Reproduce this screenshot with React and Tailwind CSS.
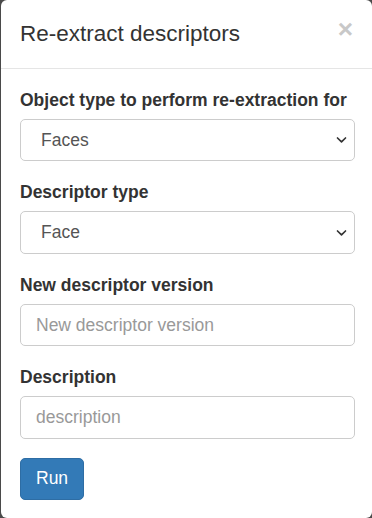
import React from "react";

const font = { fontFamily: '"Liberation Sans", Arial, Helvetica, sans-serif' };

function Chevron() {
  return (
    <svg className="pointer-events-none absolute right-[8px] top-1/2 -translate-y-1/2" width="11" height="7" viewBox="0 0 11 7" fill="none">
      <path d="M1.5 1.5 L5.5 5.3 L9.5 1.5" stroke="#333" strokeWidth="1.7" strokeLinecap="round" strokeLinejoin="round" />
    </svg>
  );
}

function SelectField({ label, value }) {
  return (
    <div className="mb-[18.75px]">
      <label className="block text-[17.5px] font-bold leading-[25px] mb-[6.25px] text-[#333]">{label}</label>
      <div className="relative">
        <div className="h-[42.5px] w-full rounded-[5px] border-[1.25px] border-[#ccc] bg-white pl-[20px] text-[17.5px] leading-[40px] text-[#555]">
          {value}
        </div>
        <Chevron />
      </div>
    </div>
  );
}

function InputField({ label, placeholder }) {
  return (
    <div className="mb-[18.75px]">
      <label className="block text-[17.5px] font-bold leading-[25px] mb-[6.25px] text-[#333]">{label}</label>
      <input
        className="block h-[42.5px] w-full rounded-[5px] border-[1.25px] border-[#ccc] bg-white px-[15px] text-[17.5px] text-[#555] outline-none placeholder:text-[#999]"
        placeholder={placeholder}
        style={font}
      />
    </div>
  );
}

export default function App() {
  return (
    <div className="h-[518px] w-[372px] overflow-hidden bg-[#4a4a4a]" style={font}>
      <div className="ml-px h-full rounded-[6px] bg-white">
        <div className="flex items-start justify-between border-b-[1.25px] border-[#e5e5e5] pl-[19px] pr-[19px] pt-[17.75px] pb-[18.25px]">
          <h4 className="text-[22.5px] leading-[32.14px] text-[#333] font-normal">Re-extract descriptors</h4>
          <span className="mt-[-1.5px] text-[26.25px] font-bold leading-none text-[#c8c8c8]">×</span>
        </div>
        <div className="pl-[19px] pr-[17px] pt-[18.5px]">
          <SelectField label="Object type to perform re-extraction for" value="Faces" />
          <SelectField label="Descriptor type" value="Face" />
          <InputField label="New descriptor version" placeholder="New descriptor version" />
          <InputField label="Description" placeholder="description" />
          <button className="h-[42.5px] rounded-[5px] border-[1.25px] border-[#2e6da4] bg-[#337ab7] px-[15px] text-[17.5px] leading-[25px] text-white">
            Run
          </button>
        </div>
      </div>
    </div>
  );
}
